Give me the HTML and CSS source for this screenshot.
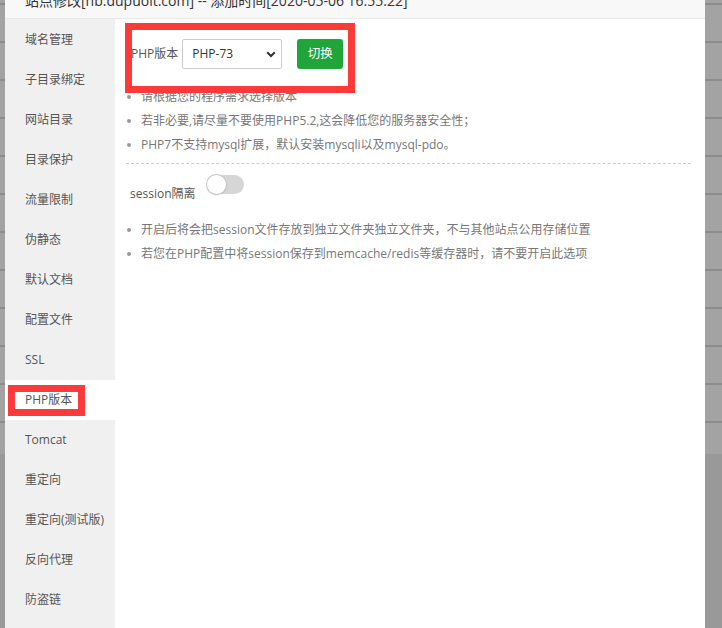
FILE: index.html
```html
<!DOCTYPE html>
<html lang="zh-CN">
<head>
<meta charset="utf-8">
<title>站点修改</title>
<link rel="stylesheet" href="styles.css">
</head>
<body>
<div class="page">
  <div class="mask mask-left"></div>
  <div class="modal">
    <div class="modal-header"><span class="modal-title">站点修改[hb.dupuoit.com] -- 添加时间[2020-05-06 16:55:22]</span></div>
    <div class="modal-body">
      <ul class="side-menu">
        <li class="side-item">域名管理</li>
        <li class="side-item">子目录绑定</li>
        <li class="side-item">网站目录</li>
        <li class="side-item">目录保护</li>
        <li class="side-item">流量限制</li>
        <li class="side-item">伪静态</li>
        <li class="side-item">默认文档</li>
        <li class="side-item">配置文件</li>
        <li class="side-item">SSL</li>
        <li class="side-item active">PHP版本</li>
        <li class="side-item">Tomcat</li>
        <li class="side-item">重定向</li>
        <li class="side-item">重定向(测试版)</li>
        <li class="side-item">反向代理</li>
        <li class="side-item">防盗链</li>
      </ul>
      <div class="content">
        <div class="form-line">
          <span class="form-label">PHP版本</span>
          <div class="select-box">
            <span class="select-value">PHP-73</span>
            <svg class="chevron" width="10" height="7" viewBox="0 0 10 7"><path d="M1.2 1.2 L5 5 L8.8 1.2" fill="none" stroke="#333" stroke-width="2"/></svg>
          </div>
          <span class="btn-switch">切换</span>
        </div>
        <ul class="help-list help-first">
          <li>请根据您的程序需求选择版本</li>
          <li>若非必要,请尽量不要使用PHP5.2,这会降低您的服务器安全性；</li>
          <li>PHP7不支持mysql扩展，默认安装mysqli以及mysql-pdo。</li>
        </ul>
        <div class="divider"></div>
        <div class="session-row">
          <span class="session-label">session隔离</span>
          <span class="toggle"><span class="toggle-knob"></span></span>
        </div>
        <ul class="help-list help-second">
          <li>开启后将会把session文件存放到独立文件夹独立文件夹，不与其他站点公用存储位置</li>
          <li>若您在PHP配置中将session保存到memcache/redis等缓存器时，请不要开启此选项</li>
        </ul>
      </div>
    </div>
    <div class="mark mark-top"></div>
    <div class="mark mark-side"></div>
  </div>
  <div class="mask mask-right"></div>
</div>
</body>
</html>
```

FILE: styles.css
```css
* { box-sizing: border-box; }
html, body { margin: 0; padding: 0; }
body {
  font-family: "Open Sans", "Noto Sans CJK SC", sans-serif;
  font-size: 12px;
  color: #555;
}
ul { margin: 0; padding: 0; list-style: none; }

.page {
  display: flex;
  width: 722px;
  height: 628px;
  overflow: hidden;
  background-color: #999;
  background-image: repeating-linear-gradient(to bottom, #a3a3a3 0px, #a3a3a3 3px, #8c8c8c 3px, #8c8c8c 5px, #a3a3a3 5px, #a3a3a3 38px);
  background-size: 100% 454px;
  background-repeat: no-repeat;
}
.mask { flex: none; }
.mask-left { width: 5px; }
.mask-right { width: 17px; }

.modal {
  position: relative;
  width: 700px;
  flex: none;
  background: #fff;
  display: flex;
  flex-direction: column;
}
.modal-header {
  height: 19px;
  flex: none;
  background: #f8f8f8;
  border-bottom: 1px solid #e8e8e8;
  overflow: hidden;
  padding-left: 20px;
}
.modal-title {
  display: block;
  font-size: 14px;
  line-height: 20px;
  margin-top: -9px;
  color: #333;
  white-space: nowrap;
}
.modal-body {
  flex: 1;
  display: flex;
}
.side-menu {
  width: 110px;
  flex: none;
  background: #f0f0f0;
  padding-top: 1px;
}
.side-item {
  height: 40px;
  line-height: 40px;
  padding-left: 20px;
  color: #555;
  white-space: nowrap;
}
.side-item.active { background: #fff; }

.content {
  flex: 1;
  padding: 20px 15px 0 11px;
}
.form-line {
  display: flex;
  align-items: center;
  height: 30px;
}
.form-label {
  padding-left: 5px;
  color: #555;
  line-height: 30px;
}
.select-box {
  margin-left: 4px;
  width: 100px;
  height: 30px;
  border: 1px solid #ccc;
  border-radius: 2px;
  display: flex;
  align-items: center;
  justify-content: space-between;
  padding: 0 5px 0 9px;
  color: #333;
  background: #fff;
}
.select-value { line-height: 28px; }
.chevron { display: block; }
.btn-switch {
  margin-left: 15px;
  width: 46px;
  height: 30px;
  line-height: 30px;
  text-align: center;
  background: #20a53a;
  border-radius: 3px;
  color: #fff;
  font-size: 12.5px;
}

.help-list li {
  line-height: 24px;
  color: #777;
  white-space: nowrap;
}
.help-list li::before {
  content: "";
  display: inline-block;
  width: 4px;
  height: 4px;
  border-radius: 50%;
  background: #999;
  margin: 0 10px 0 1px;
  vertical-align: middle;
  position: relative;
  top: -1px;
}
.help-first { margin-top: 16px; }
.divider {
  margin-top: 6px;
  width: 565px;
  border-top: 1px dashed #ccc;
}
.session-row {
  margin-top: 11px;
  display: flex;
  align-items: flex-start;
  padding-left: 4px;
}
.session-label {
  margin-top: 9px;
  line-height: 20px;
  color: #555;
}
.toggle {
  margin-left: 11px;
  width: 37px;
  height: 19px;
  border-radius: 10px;
  background: #d6d6d6;
  display: flex;
  align-items: center;
}
.toggle-knob {
  width: 19px;
  height: 19px;
  border-radius: 50%;
  background: #fff;
  box-shadow: 0 0 0 1px #c6c6c6, 0 1px 2px rgba(0,0,0,0.2);
}
.help-second { margin-top: 14px; }

.mark {
  position: absolute;
  border: 7px solid #fd3a3a;
}
.mark-top {
  left: 120px;
  top: 23px;
  width: 230px;
  height: 70px;
}
.mark-side {
  left: 3px;
  top: 385px;
  width: 77px;
  height: 31px;
}
```
